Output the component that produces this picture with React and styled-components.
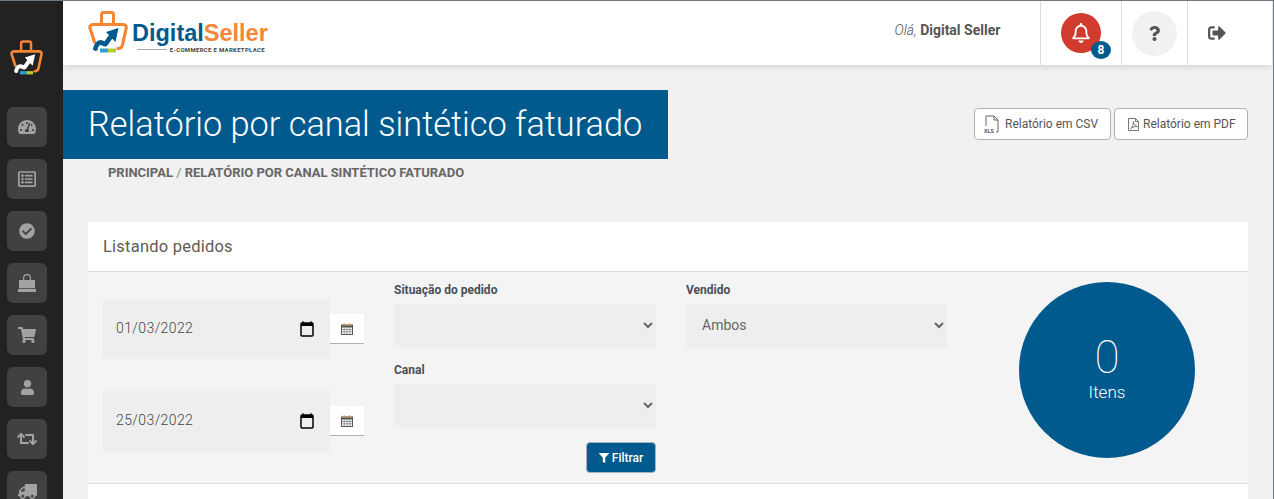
import React from "react";
import styled, { createGlobalStyle } from "styled-components";
import { FaTachometerAlt, FaRegListAlt, FaCheckCircle, FaShoppingCart, FaUser, FaRetweet, FaTruck, FaRegBell, FaQuestion, FaSignOutAlt, FaFilter } from "react-icons/fa";

const Global = createGlobalStyle`
  html, body { margin: 0; padding: 0; height: 499px; overflow: hidden; background: #f1f1f1; }
  body { font-family: Roboto, "Liberation Sans", sans-serif; color: #555; }
  * { box-sizing: border-box; }
`;
const Page = styled.div`
  display: flex; height: 499px; width: 1274px; overflow: hidden; border-top: 1px solid #6b7a80; border-right: 1px solid #6b7a80;
`;
const Sidebar = styled.aside`
  width: 63px; flex: none; background: #222; display: flex; flex-direction: column; padding-left: 7px;
`;
const SideLogo = styled.div`
  height: 106px; flex: none; padding: 39px 0 0 3px;
`;
const SideList = styled.nav`
  display: flex; flex-direction: column; gap: 12px; flex: none;
`;
const Tile = styled.div`
  width: 40px; height: 40px; border-radius: 6px; background: #414141; color: #a2a2a2;
  display: flex; align-items: center; justify-content: center; flex: none;
`;
const TruckIcon = styled(FaTruck)`transform: scaleX(-1);`;
const Main = styled.main`
  flex: 1; min-width: 0; display: flex; flex-direction: column;
`;
const Header = styled.header`
  height: 64px; flex: none; background: #fff; display: flex; align-items: stretch; margin-right: 1px;
  box-shadow: 0 2px 6px rgba(0,0,0,.12);
`;
const Brand = styled.div`
  display: flex; align-items: flex-start; padding: 10px 0 0 25px; flex: 1;
`;
const BrandWords = styled.div`
  display: flex; flex-direction: column; margin: 12px 0 0 4px;
`;
const BrandName = styled.div`
  font: 700 23.5px/20px "Liberation Sans", Arial, sans-serif; color: #005a8e; white-space: nowrap;
`;
const Orange = styled.span`color: #f58634;`;
const BrandSub = styled.div`
  display: flex; align-items: center; justify-content: flex-end; gap: 3px; height: 9px; margin-top: 2px; padding-right: 3px;
  font: 700 6px/9px Roboto, sans-serif; letter-spacing: .3px; color: #444; white-space: nowrap;
`;
const SubLine = styled.i`display: block; width: 30px; height: 1px; background: #aaa;`;
const Hello = styled.div`
  width: 145.500px; padding-top: 21px; font-size: 14px; line-height: 16px; white-space: nowrap; color: #555;
  em { font-weight: 300; }
  b { font-weight: 700; }
`;
const HeadCell = styled.div`
  width: ${p => p.$w}px; flex: none; border-left: 1px solid #ddd; display: flex; align-items: center; justify-content: ${p => p.$start ? "flex-start" : "center"};
  padding-left: ${p => p.$start ? 20 : 0}px;
`;
const Round = styled.div`
  width: ${p => p.$s}px; height: ${p => p.$s}px; border-radius: 50%; background: ${p => p.$bg};
  display: flex; align-items: center; justify-content: center; position: relative; color: ${p => p.$fg};
`;
const Badge = styled.span`
  position: absolute; right: -10px; bottom: -6px; width: 20px; height: 18px; border-radius: 50%; background: #005a8e;
  color: #fff; font-size: 12px; font-weight: 700; display: flex; align-items: center; justify-content: center;
`;
const Content = styled.div`
  flex: 1; min-height: 0; display: flex; flex-direction: column;
`;
const TitleRow = styled.div`
  display: flex; justify-content: space-between; align-items: flex-start; margin-top: 25px; padding-right: 25px;
`;
const TitleBox = styled.h1`
  margin: 0; width: 605px; height: 69px; background: #005a8e; color: #fff; font-weight: 300; font-size: 34.35px; line-height: 68px;
  padding-left: 25px; white-space: nowrap;
`;
const Actions = styled.div`display: flex; gap: 3px; margin-top: 18px;`;
const ActionBtn = styled.button`
  height: 32px; border: 1px solid #a9b3bc; border-radius: 4px; background: #fff; color: #555; font: 400 12px Roboto, sans-serif;
  display: flex; align-items: center; gap: ${p => p.$gap}px; width: ${p => p.$w}px; padding: 0 0 0 ${p => p.$pad}px;
`;
const Crumbs = styled.div`
  margin: 7px 0 0 45px; height: 50px; font-size: 13px; line-height: 14px; font-weight: 700; text-transform: uppercase; color: #666; letter-spacing: -.02px;
  span { font-weight: 400; color: #888; }
`;
const Card = styled.section`
  margin: 6px 25px 0 25px; display: flex; flex-direction: column; flex: 1; background: #fff;
`;
const CardHead = styled.div`
  height: 50px; background: #fff; border-bottom: 1px solid #ddd; padding: 0 15px; font-size: 16.5px; line-height: 49px; color: #635a55; letter-spacing: .22px;
`;
const CardBody = styled.div`
  height: 212px; background: #f4f4f4; border-bottom: 1px solid #ddd; padding: 0 15px; display: grid;
  grid-template-columns: 291px 292px 261px 1fr; align-items: start;
`;
const DateCol = styled.div`
  display: flex; flex-direction: column; gap: 32px; padding-top: 27px;
`;
const DateRow = styled.div`display: flex; align-items: center;`;
const DateField = styled.div`
  width: 227px; height: 60px; background: #eee; display: flex; align-items: center; justify-content: space-between; padding: 0 16px 0 13px;
`;
const DateInput = styled.input`
  border: 0; background: none; outline: 0; width: 120px; padding: 0 0 2px; font: 300 14px Roboto, sans-serif; color: #444; letter-spacing: .4px;
`;
const AddOn = styled.div`
  width: 34px; height: 30px; background: #fff; border-bottom: 1px solid #aab1b8; display: flex; align-items: center; justify-content: center;
`;
const FieldCol = styled.div`
  display: flex; flex-direction: column;
`;
const Label = styled.label`
  font-size: 12px; line-height: 14px; font-weight: 700; color: #4a4f57; display: block; margin: ${p => p.$top}px 0 7px;
`;
const Select = styled.select`
  width: ${p => p.$w}px; height: 43px; border: 0; background: #eee; color: #666; font: 400 14px Roboto, sans-serif; padding: 0 12px 2px; outline: 0; display: block;
`;
const FilterBtn = styled.button`
  align-self: flex-end; margin: 15px 30px 0 0; width: 70px; height: 31px; border: 1px solid #a9b3bc; border-radius: 4px; background: #005a8e; color: #fff;
  font: 500 12px Roboto, sans-serif; display: flex; align-items: center; justify-content: center; gap: 3px; padding: 0;
`;
const CounterWrap = styled.div`display: flex; padding: 10px 0 0 72px;`;
const Counter = styled.div`
  width: 176px; height: 176px; border-radius: 50%; background: #005a8e; color: #fff; display: flex; flex-direction: column; align-items: center; justify-content: center; padding-bottom: 6px;
`;
const CounterNum = styled.div`font-size: 46px; line-height: 50px; font-weight: 100;`;
const CounterLabel = styled.div`font-size: 17px; line-height: 20px; font-weight: 300;`;

const ShopLogo = ({ w, h, arrow = "#005a8e" }) => (
  <svg width={w} height={h} viewBox="0 0 40 42" fill="none">
    <path d="M13.500 13V3.500c0-1 .7-2 2-2h8c1.300 0 2 1 2 2V13" stroke="#f58634" strokeWidth="3"/>
    <path d="M6.500 31L2.300 18C1.300 15 2.500 13.500 5 13.500h30c2.500 0 3.700 1.500 3 4.500l-3.500 16c-.5 2.500-2 3.500-4.500 3.700" stroke="#f58634" strokeWidth="3.200" strokeLinecap="round" strokeLinejoin="round"/>
    <path d="M7.500 37.500c.5-3 2.500-6 5-6 3 0 3.500 2.500 5 1.500 1.500-1 2-4 7-9" stroke={arrow} strokeWidth="4.800" strokeLinecap="round" strokeLinejoin="round"/>
    <path d="M18 21l12.500-4-3 14z" fill={arrow}/>
    <rect x="12" y="37.500" width="8" height="4" fill="#2a9fd6"/>
    <rect x="20" y="37.500" width="8" height="4" fill="#b5cc2e"/>
  </svg>
);

const BagIcon = () => (
  <svg width="18" height="18" viewBox="0 0 18 18" fill="currentColor">
    <path fillRule="evenodd" d="M1 6h4V4a4 4 0 0 1 8 0v2h4v8.300H1zM6.200 6h5.600V4a2.800 2.800 0 0 0-5.600 0z"/>
    <path d="M0 15h18v3H0z"/>
  </svg>
);
const icons = [
  <FaTachometerAlt size={18} />,
  <FaRegListAlt size={18} />,
  <FaCheckCircle size={16} />,
  <BagIcon />,
  <FaShoppingCart size={18} />,
  <FaUser size={15} />,
  <FaRetweet size={20} />,
  <TruckIcon size={19} />,
];

const CalSmall = () => (
  <svg width="12" height="12" viewBox="0 0 12 12" fill="none">
    <rect x=".5" y="2" width="11" height="9.500" fill="#fff" stroke="#555"/>
    <path d="M.5 2.500h11v2H.5z" fill="#555"/>
    <path d="M.5 6.500h11M.5 8.800h11M3.200 4v7.500M6 4v7.500M8.800 4v7.500" stroke="#777" strokeWidth=".7"/>
    <rect x="2.500" y=".5" width="1.500" height="2.500" fill="#c98a3a"/><rect x="8" y=".5" width="1.500" height="2.500" fill="#c98a3a"/>
  </svg>
);
const CalNative = () => (
  <svg width="14" height="16" viewBox="0 0 14 16" fill="none">
    <path d="M3 0v3M11 0v3" stroke="#000" strokeWidth="1"/>
    <rect x="1" y="2" width="12" height="13" rx="1" stroke="#000" strokeWidth="1.500"/>
    <rect x="1" y="2" width="12" height="3" fill="#000"/>
  </svg>
);
const DateBox = ({ value }) => (
  <DateRow>
    <DateField>
      <DateInput defaultValue={value} aria-label="Data" />
      <CalNative />
    </DateField>
    <AddOn><CalSmall /></AddOn>
  </DateRow>
);

export default function App() {
  return (
    <>
      <Global />
      <Page>
        <Sidebar>
          <SideLogo><ShopLogo w={33} h={35} arrow="#fff" /></SideLogo>
          <SideList>{icons.map((ico, i) => <Tile key={i}>{ico}</Tile>)}</SideList>
        </Sidebar>
        <Main>
          <Header>
            <Brand>
              <ShopLogo w={40} h={42} />
              <BrandWords>
                <BrandName>Digital<Orange>Seller</Orange></BrandName>
                <BrandSub><SubLine />E-COMMERCE E MARKETPLACE</BrandSub>
              </BrandWords>
            </Brand>
            <Hello><em>Olá,</em> <b>Digital Seller</b></Hello>
            <HeadCell $w={81}>
              <Round $s={40} $bg="#d13b2e" $fg="#fff">
                <FaRegBell size={20} />
                <Badge>8</Badge>
              </Round>
            </HeadCell>
            <HeadCell $w={66}><Round $s={45} $bg="#f1f1f1" $fg="#555"><FaQuestion size={15} /></Round></HeadCell>
            <HeadCell $w={85} $start><FaSignOutAlt size={18} color="#555" /></HeadCell>
          </Header>
          <Content>
            <TitleRow>
              <TitleBox>Relatório por canal sintético faturado</TitleBox>
              <Actions>
                <ActionBtn $w={137} $gap={6} $pad={9}>
                  <svg width="15" height="19" viewBox="0 0 15 19" fill="none" stroke="#555" strokeWidth=".9">
                    <path d="M2 11V1h8l4 4v12h-2M10 1v4h4"/>
                    <text x="0" y="17.500" fontSize="5.500" fontWeight="700" fill="#555" stroke="none" fontFamily="Roboto">XLS</text>
                  </svg>
                  Relatório em CSV
                </ActionBtn>
                <ActionBtn $w={134} $gap={4} $pad={13}>
                  <svg width="11" height="13" viewBox="0 0 11 13" fill="none" stroke="#666" strokeWidth=".9">
                    <path d="M.5.500h7l3 3v9H.5zM7.500.500v3h3M2.500 10.500c2-1 3-4 2.800-7 .5 3 2 4.500 4 5-2-.2-4.500.5-6.800 2z"/>
                  </svg>
                  Relatório em PDF
                </ActionBtn>
              </Actions>
            </TitleRow>
            <Crumbs>Principal <span>/</span> Relatório por canal sintético faturado</Crumbs>
            <Card>
              <CardHead>Listando pedidos</CardHead>
              <CardBody>
                <DateCol>
                  <DateBox value="01/03/2022" />
                  <DateBox value="25/03/2022" />
                </DateCol>
                <FieldCol>
                  <Label $top={11}>Situação do pedido</Label>
                  <Select $w={262} aria-label="Situação do pedido"><option></option></Select>
                  <Label $top={16}>Canal</Label>
                  <Select $w={262} aria-label="Canal"><option></option></Select>
                  <FilterBtn>
                    <FaFilter size={10} />
                    Filtrar
                  </FilterBtn>
                </FieldCol>
                <FieldCol>
                  <Label $top={11}>Vendido</Label>
                  <Select $w={261} aria-label="Vendido" defaultValue="Ambos"><option>Ambos</option></Select>
                </FieldCol>
                <CounterWrap>
                  <Counter>
                    <CounterNum>0</CounterNum>
                    <CounterLabel>Itens</CounterLabel>
                  </Counter>
                </CounterWrap>
              </CardBody>
            </Card>
          </Content>
        </Main>
      </Page>
    </>
  );
}
